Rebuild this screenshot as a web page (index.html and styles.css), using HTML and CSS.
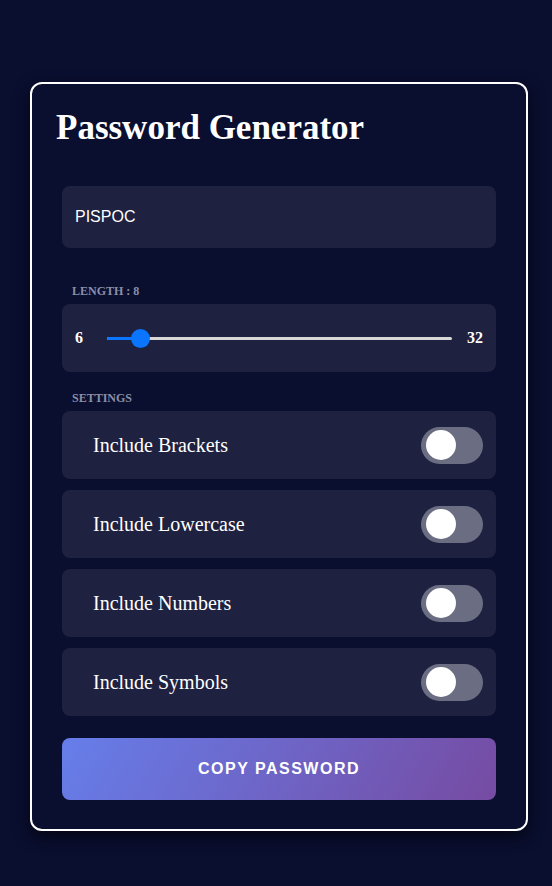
FILE: index.html
```html
<!DOCTYPE html>
<html>
<head>
<meta charset="utf-8">
<link rel="stylesheet" href="styles.css">
</head>
<body>
<div class="card">
  <h1 class="title">Password Generator</h1>
  <div class="inner">
    <div class="result">PISPOC</div>
    <div class="label label-length">LENGTH : 8</div>
    <div class="panel slider-panel">
      <span class="num">6</span>
      <div class="track">
        <div class="fill"></div>
        <div class="thumb"></div>
      </div>
      <span class="num">32</span>
    </div>
    <div class="label label-settings">SETTINGS</div>
    <div class="settings">
      <div class="panel row"><span class="row-text">Include Brackets</span><span class="toggle"><span class="knob"></span></span></div>
      <div class="panel row"><span class="row-text">Include Lowercase</span><span class="toggle"><span class="knob"></span></span></div>
      <div class="panel row"><span class="row-text">Include Numbers</span><span class="toggle"><span class="knob"></span></span></div>
      <div class="panel row"><span class="row-text">Include Symbols</span><span class="toggle"><span class="knob"></span></span></div>
    </div>
    <button class="copy">COPY PASSWORD</button>
  </div>
</div>
</body>
</html>
```
FILE: styles.css
```css
html, body {
  margin: 0;
  padding: 0;
  background: #0a0e2f;
}
body {
  font-family: "Liberation Serif", "Times New Roman", serif;
  color: #fff;
  padding-top: 82px;
  height: 886px;
  box-sizing: border-box;
}
.card {
  margin: 0 24px 0 30px;
  width: 498px;
  box-sizing: border-box;
  border: 2px solid #fff;
  border-radius: 12px;
  padding: 24px 24px 29px 24px;
  box-shadow: 0 6px 16px rgba(0, 0, 0, 0.6);
}
.title {
  margin: 0;
  font-size: 35px;
  font-weight: bold;
  line-height: 40px;
  margin-bottom: 38px;
}
.inner {
  margin: 0 6px;
}
.result {
  background: #1e2140;
  border-radius: 8px;
  height: 62px;
  display: flex;
  align-items: center;
  padding: 0 13px;
  font-family: "Liberation Sans", Arial, sans-serif;
  font-size: 16px;
}
.label {
  font-size: 12px;
  font-weight: bold;
  color: #8a8ea8;
  padding-left: 10px;
  line-height: 14px;
}
.label-length {
  margin-top: 36px;
  margin-bottom: 6px;
}
.label-settings {
  margin-top: 19px;
  margin-bottom: 6px;
}
.panel {
  background: #1e2140;
  border-radius: 8px;
}
.slider-panel {
  height: 68px;
  display: flex;
  align-items: center;
  padding: 0 13px;
  box-sizing: border-box;
}
.num {
  font-weight: bold;
  font-size: 16px;
}
.track {
  flex: 1;
  margin: 0 15px 0 24px;
  height: 3px;
  background: #d8d8d8;
  border-radius: 2px;
  position: relative;
}
.fill {
  width: 34px;
  height: 100%;
  background: #0a75ff;
  border-radius: 2px;
}
.thumb {
  position: absolute;
  left: 24px;
  top: -8px;
  width: 19px;
  height: 19px;
  border-radius: 50%;
  background: #0a75ff;
}
.settings {
  display: flex;
  flex-direction: column;
  gap: 11px;
}
.row {
  height: 68px;
  display: flex;
  align-items: center;
  justify-content: space-between;
  padding: 0 13px 0 31px;
}
.row-text {
  font-size: 20px;
}
.toggle {
  width: 62px;
  height: 37px;
  border-radius: 19px;
  background: #6b6e82;
  display: flex;
  align-items: center;
  padding-left: 5px;
  box-sizing: border-box;
}
.knob {
  width: 30px;
  height: 30px;
  border-radius: 50%;
  background: #fff;
}
.copy {
  display: block;
  margin-top: 22px;
  width: 100%;
  height: 62px;
  border: none;
  border-radius: 8px;
  background: linear-gradient(120deg, #667eea 0%, #764ba2 100%);
  color: #fff;
  font-family: "Liberation Sans", Arial, sans-serif;
  font-weight: bold;
  font-size: 16px;
  letter-spacing: 1.5px;
}
```
